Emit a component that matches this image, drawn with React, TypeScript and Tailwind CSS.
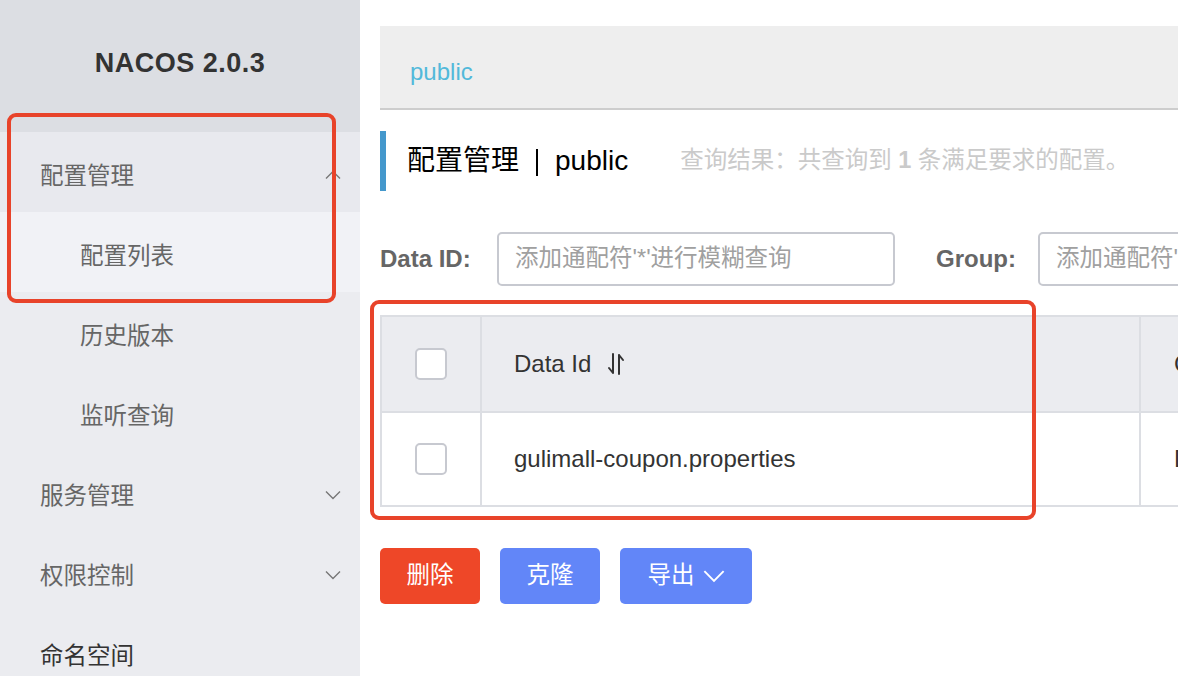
import React from "react";

const font = { fontFamily: '"Liberation Sans", "Noto Sans CJK SC", sans-serif' };

type MenuItem = { label: string; sub?: boolean; chevron?: "up" | "down"; bg: string; text: string };

const menu: MenuItem[] = [
  { label: "配置管理", chevron: "up", bg: "bg-[#e8e9ee]", text: "text-[#666]" },
  { label: "配置列表", sub: true, bg: "bg-[#f1f2f6]", text: "text-[#666]" },
  { label: "历史版本", sub: true, bg: "", text: "text-[#666]" },
  { label: "监听查询", sub: true, bg: "", text: "text-[#666]" },
  { label: "服务管理", chevron: "down", bg: "", text: "text-[#666]" },
  { label: "权限控制", chevron: "down", bg: "", text: "text-[#666]" },
  { label: "命名空间", bg: "", text: "text-[#333]" },
];

function Chevron({ dir, className }: { dir: "up" | "down"; className?: string }) {
  return (
    <svg width="16" height="10" viewBox="0 0 16 10" className={className} fill="none" stroke="currentColor" strokeWidth="1.4">
      {dir === "down" ? <path d="M1 1.5 8 8.5 15 1.5" /> : <path d="M1 8.5 8 1.5 15 8.5" />}
    </svg>
  );
}

function SortIcon() {
  return (
    <svg width="24" height="26" viewBox="0 0 24 26" fill="none" stroke="#333" strokeWidth="2" strokeLinecap="round">
      <path d="M9 3v19M9 22 5 17" />
      <path d="M15 23V4M15 4l4 5" />
    </svg>
  );
}

function Checkbox() {
  return <div className="h-8 w-8 rounded-[5px] border-2 border-[#c7c9d0] bg-white" />;
}

function Sidebar() {
  return (
    <aside className="flex w-[360px] shrink-0 flex-col bg-[#ebecf0]">
      <div className="flex h-[132px] shrink-0 items-center justify-center bg-[#dcdee3] pb-1.5">
        <span className="text-[27px] font-bold tracking-[0.5px] text-[#333]">NACOS 2.0.3</span>
      </div>
      {menu.map((m) => (
        <div key={m.label} className={`flex h-20 shrink-0 items-center pt-[9px] ${m.bg} ${m.sub ? "pl-20" : "pl-10"} pr-[19px]`}>
          <span className={`flex-1 text-[23.5px] ${m.text}`}>{m.label}</span>
          {m.chevron && <Chevron dir={m.chevron} className="-mt-1 text-[#777]" />}
        </div>
      ))}
    </aside>
  );
}

function Main() {
  return (
    <main className="flex min-w-0 flex-1 flex-col pl-5 pt-[26px]">
      <div className="flex h-[84px] w-[1000px] shrink-0 items-center border-b-2 border-[#cdcdcd] bg-[#eeeeee] pl-[30px] pt-2.5">
        <span className="text-[24px] text-[#52b9da]">public</span>
      </div>

      <div className="mt-[21px] flex h-[60px] w-[1000px] shrink-0 items-center">
        <div className="h-[60px] w-[6px] shrink-0 bg-[#4498cc]" />
        <span className="ml-[21px] flex shrink-0 items-center whitespace-nowrap text-[28px] text-black">
          配置管理
          <span className="ml-[17px] mr-[17px] mt-0.5 h-[27px] w-[2px] bg-black" />
          public
        </span>
        <span className="ml-[52px] shrink-0 whitespace-nowrap text-[23.5px] text-[#cacaca]">
          查询结果：共查询到 <b>1</b> 条满足要求的配置。
        </span>
      </div>

      <div className="mt-[41px] flex h-[54px] w-[1000px] shrink-0 items-center">
        <span className="w-[117px] shrink-0 text-[24px] font-bold text-[#666]">Data ID:</span>
        <div className="flex h-[54px] w-[398px] shrink-0 items-center whitespace-nowrap rounded-[5px] border-2 border-[#c7c9d0] pl-4 text-[23.5px] text-[#a0a0a0]">
          添加通配符'*'进行模糊查询
        </div>
        <span className="ml-[41px] w-[102px] shrink-0 text-[24px] font-bold text-[#666]">Group:</span>
        <div className="flex h-[54px] w-[340px] shrink-0 items-center whitespace-nowrap rounded-[5px] border-2 border-[#c7c9d0] pl-4 text-[23.5px] text-[#a0a0a0]">
          添加通配符'*'进行模糊查询
        </div>
      </div>

      <div className="mt-[29px] w-[1000px] shrink-0 border-2 border-r-0 border-[#dcdee3]">
        <div className="flex h-[94px] bg-[#ebecf0]">
          <div className="flex w-[100px] shrink-0 items-center justify-center border-r-2 border-[#dcdee3]">
            <Checkbox />
          </div>
          <div className="flex w-[659px] shrink-0 items-center gap-[13px] border-r-2 border-[#dcdee3] pl-[32px] text-[24px] text-[#333]">
            Data Id <SortIcon />
          </div>
          <div className="flex flex-1 items-center whitespace-nowrap pl-[33px] text-[24px] text-[#333]">Group</div>
        </div>
        <div className="flex h-[94px] border-t-2 border-[#dcdee3] bg-white">
          <div className="flex w-[100px] shrink-0 items-center justify-center border-r-2 border-[#dcdee3]">
            <Checkbox />
          </div>
          <div className="flex w-[659px] shrink-0 items-center border-r-2 border-[#dcdee3] pl-[32px] text-[24px] text-[#333]">
            gulimall-coupon.properties
          </div>
          <div className="flex flex-1 items-center whitespace-nowrap pl-[33px] text-[24px] text-[#333]">DEFAULT_GROUP</div>
        </div>
      </div>

      <div className="mt-[41px] flex gap-5">
        <button className="h-14 w-[100px] shrink-0 rounded-[5px] bg-[#ee4728] text-[23.5px] text-white">删除</button>
        <button className="h-14 w-[100px] shrink-0 rounded-[5px] bg-[#6286f8] text-[23.5px] text-white">克隆</button>
        <button className="flex h-14 w-[132px] shrink-0 items-center justify-center gap-2 rounded-[5px] bg-[#6286f8] text-[23.5px] text-white">
          导出 <Chevron dir="down" className="h-[14px] w-[22px] text-white" />
        </button>
      </div>
    </main>
  );
}

export default function App() {
  return (
    <div className="relative flex h-[676px] w-[1178px] overflow-hidden bg-white" style={font}>
      <Sidebar />
      <Main />
      <div className="pointer-events-none absolute left-[7px] top-[113px] h-[190px] w-[329px] rounded-[9px] border-4 border-[#e8432a]" />
      <div className="pointer-events-none absolute left-[370px] top-[300px] h-[220px] w-[666px] rounded-[9px] border-4 border-[#e8432a]" />
    </div>
  );
}
